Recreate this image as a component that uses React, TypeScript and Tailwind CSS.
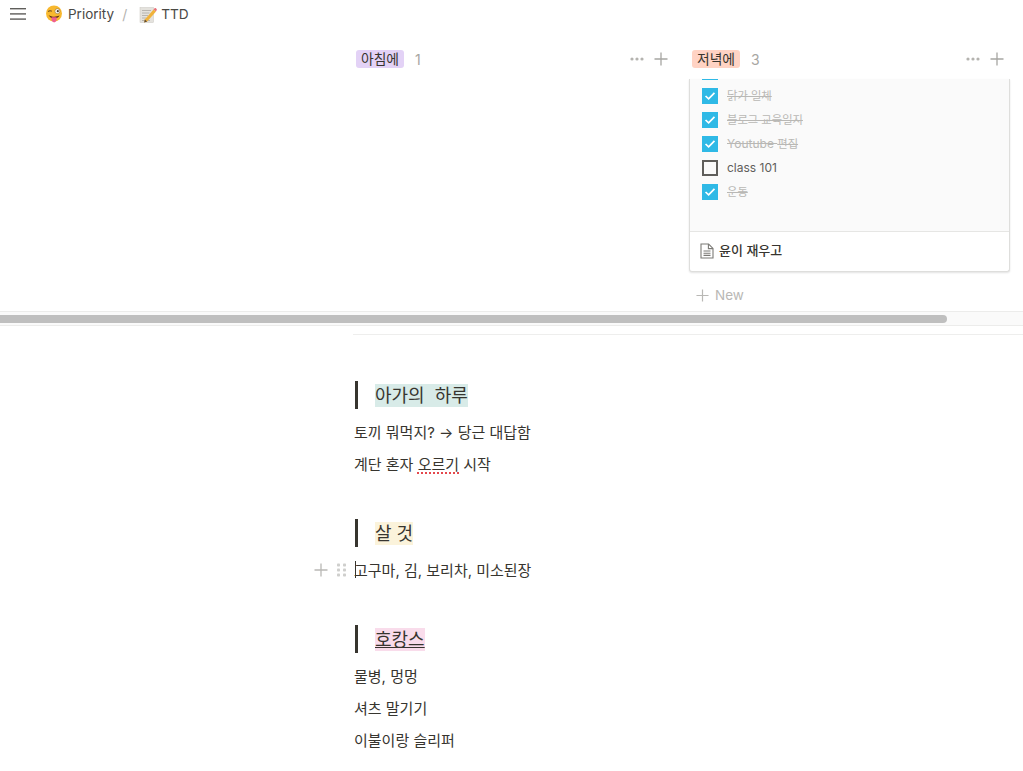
import React from "react";

const F = "font-['Inter','Noto_Sans_CJK_KR',sans-serif]";

function Plus({ className = "" }: { className?: string }) {
  return (
    <svg viewBox="0 0 14 14" className={className} fill="none" stroke="currentColor" strokeWidth="1.3">
      <path d="M7 0.5V13.5M0.5 7H13.5" />
    </svg>
  );
}

function Dots() {
  return (
    <svg viewBox="0 0 14 4" className="w-[14px] h-[4px] text-[#b4b3af]" fill="currentColor">
      <circle cx="2" cy="2" r="1.6" />
      <circle cx="7" cy="2" r="1.6" />
      <circle cx="12" cy="2" r="1.6" />
    </svg>
  );
}

function WinkFace() {
  return (
    <svg viewBox="0 0 18 18" className="w-[18px] h-[18px] shrink-0">
      <circle cx="9" cy="8.5" r="8" fill="#f8b82e" />
      <path d="M3.2 6.6C4.2 5.6 5.6 5.6 6.8 6.2" stroke="#6b4a1e" strokeWidth="1.1" fill="none" />
      <circle cx="12.4" cy="6.2" r="2.5" fill="#fff" stroke="#8a6a30" strokeWidth="0.6" />
      <circle cx="12.8" cy="6.2" r="1.1" fill="#4a3a28" />
      <path d="M3.6 10C6 12 11 12.4 14.6 10.6C13.6 12.6 11.6 13.4 9 13.4C6.4 13.4 4.4 12 3.6 10Z" fill="#5b2a16" />
      <path d="M6.6 12.2H11.6V14.6C11.6 16.4 10.4 17.4 9.1 17.4C7.8 17.4 6.6 16.4 6.6 14.6Z" fill="#ef5f8f" />
    </svg>
  );
}

function Memo() {
  return (
    <svg viewBox="0 0 18 18" className="w-[18px] h-[18px] shrink-0">
      <rect x="1" y="2.5" width="13.5" height="15" fill="#e4e2dd" stroke="#c9c6bf" strokeWidth="0.5" />
      <path d="M3 5.5H12M3 8H10.5M3 10.5H9M3 13H7.5M3 15.5H11" stroke="#a5a29c" strokeWidth="0.7" />
      <path d="M5.8 14.6L14.6 4.4L17 6.5L8.2 16.6L5.2 17.4Z" fill="#f0b23a" />
      <path d="M14.6 4.4L15.6 3.3C16 2.9 16.5 2.9 16.9 3.2L17.6 3.9C18 4.3 18 4.8 17.6 5.2L17 6.5Z" fill="#e8707a" />
      <path d="M5.8 14.6L5.2 17.4L8.2 16.6Z" fill="#5d4a34" />
    </svg>
  );
}

function Check({ done, children, small }: { done: boolean; children?: React.ReactNode; small?: boolean }) {
  return (
    <div className="h-6 flex items-center pl-[12px]">
      {done ? (
        <div className="w-4 h-4 bg-[#2fb9e6] flex items-center justify-center shrink-0">
          <svg viewBox="0 0 14 14" className="w-[12px] h-[12px]" fill="none" stroke="#fff" strokeWidth="2">
            <path d="M1.8 7L5.4 10.4L12.2 3.4" />
          </svg>
        </div>
      ) : (
        <div className="w-4 h-4 border-2 border-[#5f5e5b] shrink-0" />
      )}
      <span
        className={`ml-[9px] leading-6 ${small ? "text-[11.3px]" : "text-[12px]"} ${
          done ? "text-[#b9b8b5] line-through" : "text-[#5f5e5b]"
        }`}
      >
        {children}
      </span>
    </div>
  );
}

function ColumnHead({ label, count, tag }: { label: string; count: string; tag: string }) {
  return (
    <div className="h-[38px] flex items-center">
      <span className={`h-[18px] w-[48px] text-center rounded-[3px] text-[13.8px] leading-[18px] text-[#37352f] ${tag}`}>{label}</span>
      <span className="ml-[11px] text-[14px] text-[#a7a6a2]">{count}</span>
      <div className="ml-auto flex items-center gap-[10px] text-[#a7a6a2]">
        <Dots />
        <Plus className="w-[14px] h-[14px]" />
      </div>
    </div>
  );
}

function Callout({ label, bg, mt }: { label: string; bg: string; mt: string }) {
  return (
    <div className={`h-7 flex items-center border-l-[3px] border-[#37352f] pl-[17px] ${mt}`}>
      <span className={`text-[18px] leading-[23px] h-[23px] text-[#37352f] ${bg}`}>{label}</span>
    </div>
  );
}

function Line({ children, mt = "mt-2" }: { children: React.ReactNode; mt?: string }) {
  return <div className={`h-6 text-[15px] leading-[26px] text-[#37352f] ${mt}`}>{children}</div>;
}

export default function App() {
  return (
    <div className={`${F} w-[1023px] h-[771px] overflow-hidden bg-white`}>
      <header className="h-[28px] flex items-center pl-[10px] text-[#37352f]">
        <svg viewBox="0 0 16 12" className="w-4 h-3 text-[#5f5e5b]" fill="currentColor">
          <rect y="0" width="16" height="1.4" />
          <rect y="5.2" width="16" height="1.4" />
          <rect y="10.4" width="16" height="1.4" />
        </svg>
        <div className="ml-[19px]"><WinkFace /></div>
        <span className="ml-[5px] text-[13.5px] text-[#4a4945]">Priority</span>
        <span className="ml-[8px] text-[14px] text-[#b4b3af]">/</span>
        <div className="ml-[12px]"><Memo /></div>
        <span className="ml-[4px] text-[13.7px] text-[#4a4945]">TTD</span>
      </header>

      <section className="h-[283px] pl-[356px] flex gap-6 pt-[12px]">
        <div className="w-[312px] shrink-0">
          <ColumnHead label="아침에" count="1" tag="bg-[#e3d2f6]" />
        </div>
        <div className="w-[312px] shrink-0 flex flex-col">
          <ColumnHead label="저녁에" count="3" tag="bg-[#ffd3c4]" />
          <div className="ml-[-3px] w-[321px] h-[193px] mt-[1px] shrink-0 border-x border-b border-[#dededc] rounded-b-[3px] shadow-[0_1px_2px_rgba(15,15,15,0.12)] overflow-hidden flex flex-col bg-white">
            <div className="h-[153px] shrink-0 bg-[#fafafa] border-b border-[#e6e6e4] overflow-hidden">
              <div className="mt-[-19px]">
                <Check done />
                <Check done small>닭가 일체</Check>
                <Check done small>블로그 교육일지</Check>
                <Check done>Youtube <span className="text-[11.3px]">편집</span></Check>
                <Check done={false}>class 101</Check>
                <Check done small>운동</Check>
              </div>
            </div>
            <div className="flex-1 flex items-center pl-[10px] pb-[1px]">
              <svg viewBox="0 0 14 16" className="w-[14px] h-4 text-[#7b7a76]" fill="none" stroke="currentColor" strokeWidth="1.1">
                <path d="M1 1H8.6L13 5.4V15H1Z" />
                <path d="M8.4 1V5.6H13M3.5 8H10.5M3.5 10.2H10.5M3.5 12.4H10.5" />
              </svg>
              <span className="ml-[5px] text-[13px] font-medium text-[#37352f]">윤이 재우고</span>
            </div>
          </div>
          <div className="mt-[13px] ml-[4px] h-5 flex items-center text-[#b9b8b5]">
            <Plus className="w-[13px] h-[13px]" />
            <span className="ml-[6px] text-[13.5px]">New</span>
          </div>
        </div>
      </section>

      <div className="h-[15px] border-y border-[#ececeb] bg-[#fafafa] flex items-center">
        <div className="w-[947px] h-2 bg-[#bfbfbf] rounded-r-full" />
      </div>

      <div className="ml-[353px] mt-[8px] border-t border-[#eeeeed]" />

      <main className="pl-[355px] relative">
        <Callout label="아가의  하루" bg="bg-[#d8ebe8] whitespace-pre" mt="mt-[46px]" />
        <Line mt="mt-[11px]"><span className="ml-[-1px]">토끼 뭐먹지? → 당근 대답함</span></Line>
        <Line>
          <span className="ml-[-1px]">계단 혼자 </span>
          <span className="underline decoration-dotted decoration-[#e5484d] decoration-2 underline-offset-2">오르기</span> 시작
        </Line>

        <Callout label="살 것" bg="bg-[#fbf3db]" mt="mt-[43px]" />
        <div className="relative mt-[11px]">
          <div className="absolute left-[-41px] top-[5px] flex items-center text-[#b9b8b5]">
            <Plus className="w-[14px] h-[14px]" />
            <svg viewBox="0 0 10 14" className="ml-[9px] w-[10px] h-[14px]" fill="#cfcfcd">
              <rect x="0" y="0.5" width="3" height="3" rx="0.8" />
              <rect x="6" y="0.5" width="3" height="3" rx="0.8" />
              <rect x="0" y="5.5" width="3" height="3" rx="0.8" />
              <rect x="6" y="5.5" width="3" height="3" rx="0.8" />
              <rect x="0" y="10.5" width="3" height="3" rx="0.8" />
              <rect x="6" y="10.5" width="3" height="3" rx="0.8" />
            </svg>
          </div>
          <div className="absolute left-0 top-[3px] w-px h-[17px] bg-[#37352f]" />
          <Line mt="mt-0"><span className="ml-[-1px]">고구마, 김, 보리차, 미소된장</span></Line>
        </div>

        <Callout label="호캉스" bg="bg-[#f9dceb] underline" mt="mt-[43px]" />
        <Line mt="mt-[11px]"><span className="ml-[-1px]">물병, 멍멍</span></Line>
        <Line><span className="ml-[-1px]">셔츠 말기기</span></Line>
        <Line><span className="ml-[-1px]">이불이랑 슬리퍼</span></Line>
      </main>
    </div>
  );
}
